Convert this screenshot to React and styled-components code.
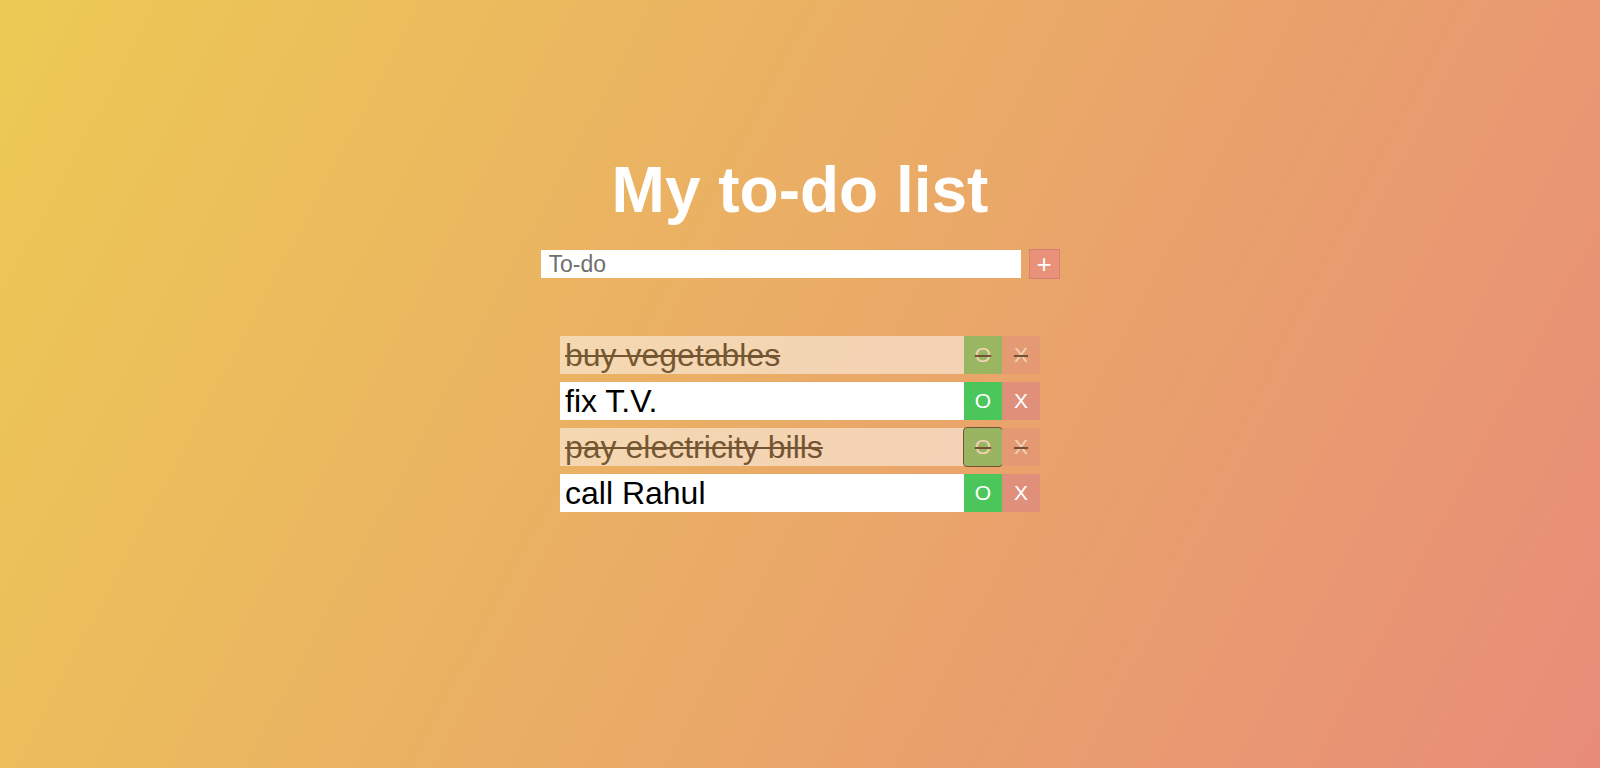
import React from "react";
import styled, { createGlobalStyle } from "styled-components";

const GlobalStyle = createGlobalStyle`
  html, body { margin: 0; padding: 0; }
  body { font-family: "Liberation Sans", Arial, sans-serif; }
  * { box-sizing: border-box; }
`;

const Page = styled.div`
  min-height: 100vh;
  background: linear-gradient(118deg, #ecca54, #e88c79);
  display: flex;
  flex-direction: column;
  align-items: center;
  padding-top: 154px;
`;

const Title = styled.h1`
  margin: 0 0 23px;
  font-size: 64px;
  line-height: 72px;
  font-weight: 700;
  color: #ffffff;
`;

const Form = styled.div`
  display: flex;
  align-items: center;
  gap: 8px;
  height: 30px;
`;

const Input = styled.input`
  width: 480px;
  height: 28px;
  border: none;
  outline: none;
  padding: 0 8px;
  font-family: "Liberation Sans", Arial, sans-serif;
  font-size: 23px;
  color: #222;
  background: #ffffff;
  &::placeholder { color: #6f6f6f; }
`;

const AddButton = styled.button`
  width: 31px;
  height: 30px;
  padding: 0;
  border: 1px solid #d5826f;
  background: #e9917a;
  color: #ffffff;
  font-family: "Liberation Sans", Arial, sans-serif;
  font-size: 26px;
  font-weight: 400;
  line-height: 1;
`;

const List = styled.ul`
  list-style: none;
  margin: 57px 0 0;
  padding: 0;
  display: flex;
  flex-direction: column;
  gap: 8px;
`;

const Row = styled.li`
  display: flex;
  width: 480px;
  height: 38px;
  opacity: ${(p) => (p.$done ? 0.5 : 1)};
`;

const Text = styled.span`
  flex: 1;
  background: #ffffff;
  color: #000000;
  font-size: 32px;
  line-height: 38px;
  padding-left: 5px;
  white-space: nowrap;
  text-decoration: ${(p) => (p.$done ? "line-through" : "none")};
  text-decoration-thickness: 2px;
`;

const ActionButton = styled.button`
  width: 38px;
  height: 38px;
  padding: 0;
  border: none;
  background: ${(p) => (p.$kind === "ok" ? "#4bc65a" : "#e0907a")};
  color: #ffffff;
  font-family: "Liberation Sans", Arial, sans-serif;
  font-size: 21px;
  line-height: 38px;
  text-decoration: ${(p) => (p.$done ? "line-through" : "none")};
  text-decoration-color: #000000;
  text-decoration-thickness: 2px;
  border-radius: ${(p) => (p.$focused ? "3px" : "0")};
  outline: ${(p) => (p.$focused ? "1.5px solid #000" : "none")};
`;

const todos = [
  { text: "buy vegetables", done: true },
  { text: "fix T.V.", done: false },
  { text: "pay electricity bills", done: true, focused: true },
  { text: "call Rahul", done: false },
];

export default function App() {
  return (
    <>
      <GlobalStyle />
      <Page>
        <Title>My to-do list</Title>
        <Form>
          <Input placeholder="To-do" />
          <AddButton>+</AddButton>
        </Form>
        <List>
          {todos.map((t) => (
            <Row key={t.text} $done={t.done}>
              <Text $done={t.done}>{t.text}</Text>
              <ActionButton $kind="ok" $done={t.done} $focused={t.focused}>O</ActionButton>
              <ActionButton $kind="del" $done={t.done}>X</ActionButton>
            </Row>
          ))}
        </List>
      </Page>
    </>
  );
}
